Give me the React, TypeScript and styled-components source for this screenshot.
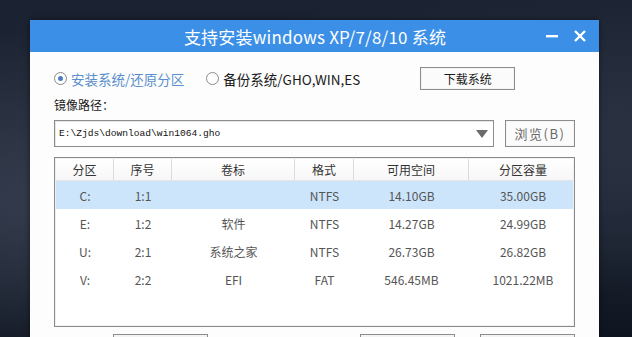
import React from "react";
import styled, { createGlobalStyle } from "styled-components";

const GlobalStyle = createGlobalStyle`
   html, body {
      margin: 0;
      padding: 0;
      width: 632px;
      height: 337px;
      overflow: hidden;
   }
   body {
      font-family: "Noto Sans CJK SC", "Noto Sans", sans-serif;
   }
`;

const columns = [
   { name: "分区", width: 58 },
   { name: "序号", width: 58 },
   { name: "卷标", width: 123 },
   { name: "格式", width: 59 },
   { name: "可用空间", width: 115 },
   { name: "分区容量", width: 108 },
];

const rows = [
   ["C:", "1:1", "", "NTFS", "14.10GB", "35.00GB"],
   ["E:", "1:2", "软件", "NTFS", "14.27GB", "24.99GB"],
   ["U:", "2:1", "系统之家", "NTFS", "26.73GB", "26.82GB"],
   ["V:", "2:2", "EFI", "FAT", "546.45MB", "1021.22MB"],
];

const gridCols = columns.map((c) => `${c.width}px`).join(" ");

const App = () => {
   return (
      <Page>
         <GlobalStyle />
         <Window>
            <TitleBar>
               <Title>支持安装windows XP/7/8/10 系统</Title>
               <WinControls>
                  <CtrlButton aria-label="minimize">
                     <svg width="14" height="14" viewBox="0 0 14 14">
                        <rect x="1" y="6" width="12" height="2.4" fill="#fff" />
                     </svg>
                  </CtrlButton>
                  <CtrlButton aria-label="close">
                     <svg width="14" height="14" viewBox="0 0 14 14">
                        <path d="M2 2 L12 12 M12 2 L2 12" stroke="#fff" strokeWidth="2.4" />
                     </svg>
                  </CtrlButton>
               </WinControls>
            </TitleBar>

            <Body>
               <OptionRow>
                  <Radio $checked>
                     <RadioDot $checked />
                     安装系统/还原分区
                  </Radio>
                  <Radio>
                     <RadioDot />
                     备份系统/GHO,WIN,ES
                  </Radio>
                  <PlainButton $width={95}>下载系统</PlainButton>
               </OptionRow>

               <FieldLabel>镜像路径：</FieldLabel>

               <PathRow>
                  <Combo>
                     <PathText>E:\Zjds\download\win1064.gho</PathText>
                     <svg width="14" height="10" viewBox="0 0 14 10">
                        <path d="M1 1 L13 1 L7 9 Z" fill="#6b6b6b" />
                     </svg>
                  </Combo>
                  <PlainButton $width={70} $muted>浏览(B)</PlainButton>
               </PathRow>

               <Table>
                  <HeaderRow>
                     {columns.map((c, i) => (
                        <HeadCell key={c.name} $last={i === columns.length - 1}>
                           {c.name}
                        </HeadCell>
                     ))}
                  </HeaderRow>
                  {rows.map((r, ri) => (
                     <DataRow key={r[0]} $selected={ri === 0}>
                        {r.map((v, ci) => (
                           <Cell key={ci}>{v}</Cell>
                        ))}
                     </DataRow>
                  ))}
               </Table>

               <Footer>
                  <FootButton />
                  <FootSpacer />
                  <FootButton />
                  <FootButton />
               </Footer>
            </Body>
         </Window>
      </Page>
   );
};

const Page = styled.div`
   width: 632px;
   height: 337px;
   box-sizing: border-box;
   padding: 20px 33px 0 30px;
   background:
      radial-gradient(ellipse at 10% 60%, #343c4d 0%, rgba(52, 60, 77, 0) 60%),
      radial-gradient(ellipse at 95% 40%, #2a3242 0%, rgba(42, 50, 66, 0) 55%),
      linear-gradient(180deg, #1a2130 0%, #222a39 50%, #0f1520 100%);
   overflow: hidden;
`;

const Window = styled.div`
   width: 569px;
   height: 330px;
   background: #fdfdfd;
   display: flex;
   flex-direction: column;
   box-shadow: 0 0 6px rgba(0, 0, 0, 0.5);
`;

const TitleBar = styled.div`
   height: 32px;
   background: #3b8fe6;
   position: relative;
   display: flex;
   align-items: center;
   justify-content: center;
   flex-shrink: 0;
`;

const Title = styled.div`
   color: #fff;
   font-size: 17px;
   letter-spacing: 0.2px;
   margin-left: 1px;
`;

const WinControls = styled.div`
   position: absolute;
   right: 12px;
   top: 0;
   height: 32px;
   display: flex;
   align-items: center;
   gap: 14px;
`;

const CtrlButton = styled.div`
   width: 14px;
   height: 14px;
   display: flex;
   align-items: center;
   justify-content: center;
`;

const Body = styled.div`
   padding: 15px 24px 0 24px;
   display: flex;
   flex-direction: column;
`;

const OptionRow = styled.div`
   display: flex;
   align-items: center;
   height: 23px;
`;

const Radio = styled.label<{ $checked?: boolean }>`
   display: flex;
   align-items: center;
   gap: 4px;
   font-size: 13.5px;
   color: ${(p) => (p.$checked ? "#5a8fcf" : "#1a1a1a")};
   margin-right: ${(p) => (p.$checked ? "22px" : "60px")};
   white-space: nowrap;
`;

const RadioDot = styled.span<{ $checked?: boolean }>`
   width: 13px;
   height: 13px;
   border-radius: 50%;
   border: 1px solid #8a8a8a;
   box-sizing: border-box;
   background: #fff;
   position: relative;
   &::after {
      content: "";
      display: ${(p) => (p.$checked ? "block" : "none")};
      position: absolute;
      left: 3px;
      top: 3px;
      width: 5px;
      height: 5px;
      border-radius: 50%;
      background: #4d7fc0;
   }
`;

const PlainButton = styled.div<{ $width: number; $muted?: boolean }>`
   width: ${(p) => p.$width}px;
   height: ${(p) => (p.$muted ? "27px" : "23px")};
   box-sizing: border-box;
   border: 1px solid #8c8c8c;
   box-shadow: inset 0 0 0 1px #f4f4f4;
   background: #fbfbfb;
   display: flex;
   align-items: center;
   justify-content: center;
   font-size: ${(p) => (p.$muted ? "13px" : "12px")};
   color: ${(p) => (p.$muted ? "#6a6a6a" : "#1a1a1a")};
   letter-spacing: ${(p) => (p.$muted ? "1.5px" : "0")};
   flex-shrink: 0;
`;

const FieldLabel = styled.div`
   font-size: 12px;
   color: #1a1a1a;
   margin-top: 5px;
   height: 20px;
   line-height: 20px;
`;

const PathRow = styled.div`
   display: flex;
   gap: 11px;
   margin-top: 5px;
   height: 27px;
`;

const Combo = styled.div`
   flex: 1;
   box-sizing: border-box;
   border: 1px solid #8c8c8c;
   box-shadow: inset 1px 1px 0 #e6e6e6;
   background: #fff;
   display: flex;
   align-items: center;
   justify-content: space-between;
   padding: 0 4px 0 4px;
`;

const PathText = styled.span`
   font-family: "Liberation Mono", "DejaVu Sans Mono", monospace;
   font-size: 9.6px;
   color: #111;
`;

const Table = styled.div`
   margin-top: 10px;
   height: 170px;
   box-sizing: border-box;
   border: 1px solid #8a8a8a;
   box-shadow: inset 0 0 0 1px #f0f0f0;
   background: #fff;
   display: flex;
   flex-direction: column;
   padding: 1px;
`;

const HeaderRow = styled.div`
   display: grid;
   grid-template-columns: ${gridCols};
   height: 21px;
   border-bottom: 1px solid #e4e4e4;
   background: linear-gradient(#ffffff, #f7f7f7);
`;

const HeadCell = styled.div<{ $last?: boolean }>`
   display: flex;
   align-items: center;
   justify-content: center;
   font-size: 12px;
   color: #333;
   border-right: ${(p) => (p.$last ? "none" : "1px solid #dcdcdc")};
`;

const DataRow = styled.div<{ $selected?: boolean }>`
   display: grid;
   grid-template-columns: ${gridCols};
   height: 28px;
   background: ${(p) => (p.$selected ? "#cce5fb" : "transparent")};
`;

const Cell = styled.div`
   display: flex;
   align-items: center;
   justify-content: center;
   font-size: 12px;
   color: #555;
`;

const Footer = styled.div`
   display: flex;
   margin-top: 7px;
   padding-left: 59px;
   gap: 25px;
`;

const FootButton = styled.div`
   width: 95px;
   height: 24px;
   box-sizing: border-box;
   border: 1px solid #8c8c8c;
   background: #f4f4f4;
`;

const FootSpacer = styled.div`
   width: 103px;
`;

export default App;
